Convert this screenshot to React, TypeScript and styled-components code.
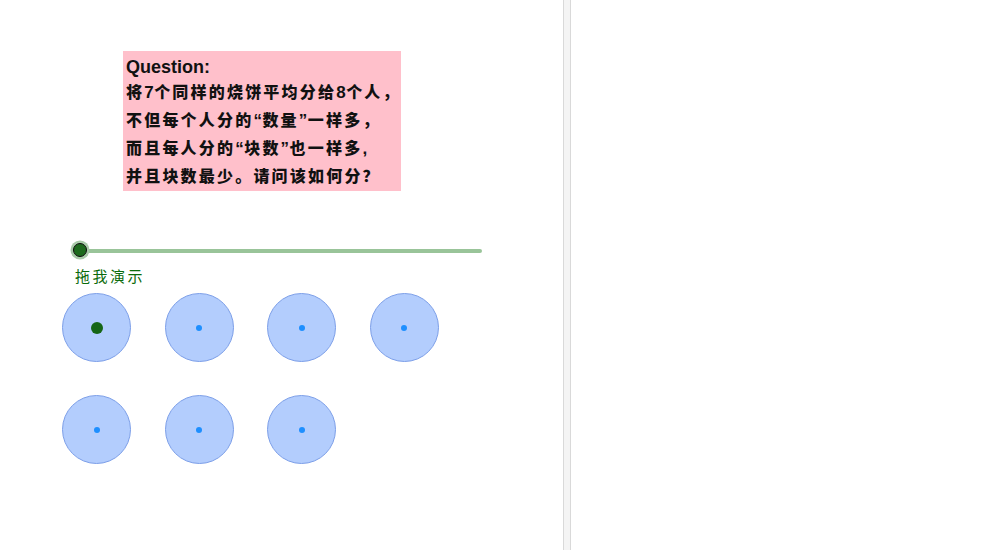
import styled, { createGlobalStyle } from 'styled-components'

const GlobalStyle = createGlobalStyle`
  html, body {
    margin: 0;
    padding: 0;
    background: #ffffff;
    font-family: "Liberation Sans", "Noto Sans CJK SC", sans-serif;
  }
`

const Page = styled.div`
  display: flex;
  width: 992px;
  height: 550px;
  overflow: hidden;
`

const LeftPanel = styled.div`
  width: 563px;
  display: flex;
  flex-direction: column;
`

const Divider = styled.div`
  width: 6px;
  background: #f4f4f4;
  border-left: 1px solid #d9d9d9;
  border-right: 1px solid #d9d9d9;
`

const RightPanel = styled.div`
  flex: 1;
  background: #ffffff;
`

const QuestionBox = styled.div`
  margin: 51px 0 0 123px;
  width: 278px;
  height: 140px;
  box-sizing: border-box;
  padding: 5px 0 0 3px;
  background: #ffc0cb;
  color: #111;
`

const QuestionTitle = styled.div`
  font-family: "Liberation Sans", Arial, sans-serif;
  font-weight: bold;
  font-size: 18px;
  line-height: 22px;
`

const QuestionLine = styled.div`
  font-family: "Noto Sans CJK SC", sans-serif;
  font-weight: 900;
  font-size: 16px;
  letter-spacing: 2.2px;
  line-height: 27px;
  white-space: nowrap;
`

// digits and quotes in the source use a latin face, narrower than the CJK ones
const Latin = styled.span`
  font-family: "Liberation Sans", Arial, sans-serif;
  font-weight: bold;
  font-size: 17px;
  letter-spacing: 0.5px;
`

const SliderRow = styled.div`
  position: relative;
  margin: 51px 0 0 80px;
  width: 402px;
  height: 18px;
  display: flex;
  align-items: center;
`

const Track = styled.div`
  width: 100%;
  height: 4px;
  border-radius: 2px;
  background: #99c499;
`

const Knob = styled.div`
  position: absolute;
  left: -7px;
  top: 1px;
  width: 12px;
  height: 12px;
  border-radius: 50%;
  background: #1d6a1d;
  border: 1.5px solid #0d0d0d;
  box-shadow: 0 0 0 2.5px #a9caa9;
`

const SliderLabel = styled.div`
  margin: 6px 0 0 75px;
  font-family: "Noto Sans CJK SC", sans-serif;
  font-size: 15px;
  letter-spacing: 2.5px;
  line-height: 20px;
  color: #0b6b0b;
`

const CircleGrid = styled.div`
  margin: 7px 0 0 62px;
  display: grid;
  grid-template-columns: repeat(4, 69px);
  column-gap: 33.5px;
  row-gap: 33px;
`

const Plate = styled.div`
  width: 69px;
  height: 69px;
  box-sizing: border-box;
  border-radius: 50%;
  background: #b3cdfd;
  border: 1px solid #7d9fe8;
  display: flex;
  align-items: center;
  justify-content: center;
`

const Centre = styled.div<{ $active?: boolean }>`
  width: ${(p) => (p.$active ? '12px' : '6px')};
  height: ${(p) => (p.$active ? '12px' : '6px')};
  border-radius: 50%;
  background: ${(p) => (p.$active ? '#166616' : '#1e8fff')};
`

const lines = [
  '将7个同样的烧饼平均分给8个人，',
  '不但每个人分的“数量”一样多，',
  '而且每人分的“块数”也一样多,',
  '并且块数最少。请问该如何分？'
]

function renderLine(text: string) {
  return text.split(/([\d“”,])/).map((part, i) =>
    /^[\d“”,]$/.test(part) ? <Latin key={i}>{part}</Latin> : part
  )
}

export default function App() {
  return (
    <>
      <GlobalStyle />
      <Page>
        <LeftPanel>
          <QuestionBox>
            <QuestionTitle>Question:</QuestionTitle>
            {lines.map((l) => (
              <QuestionLine key={l} lang="zh-CN">
                {renderLine(l)}
              </QuestionLine>
            ))}
          </QuestionBox>
          <SliderRow>
            <Track />
            <Knob />
          </SliderRow>
          <SliderLabel lang="zh-CN">拖我演示</SliderLabel>
          <CircleGrid>
            {Array.from({ length: 7 }).map((_, i) => (
              <Plate key={i}>
                <Centre $active={i === 0} />
              </Plate>
            ))}
          </CircleGrid>
        </LeftPanel>
        <Divider />
        <RightPanel />
      </Page>
    </>
  )
}
